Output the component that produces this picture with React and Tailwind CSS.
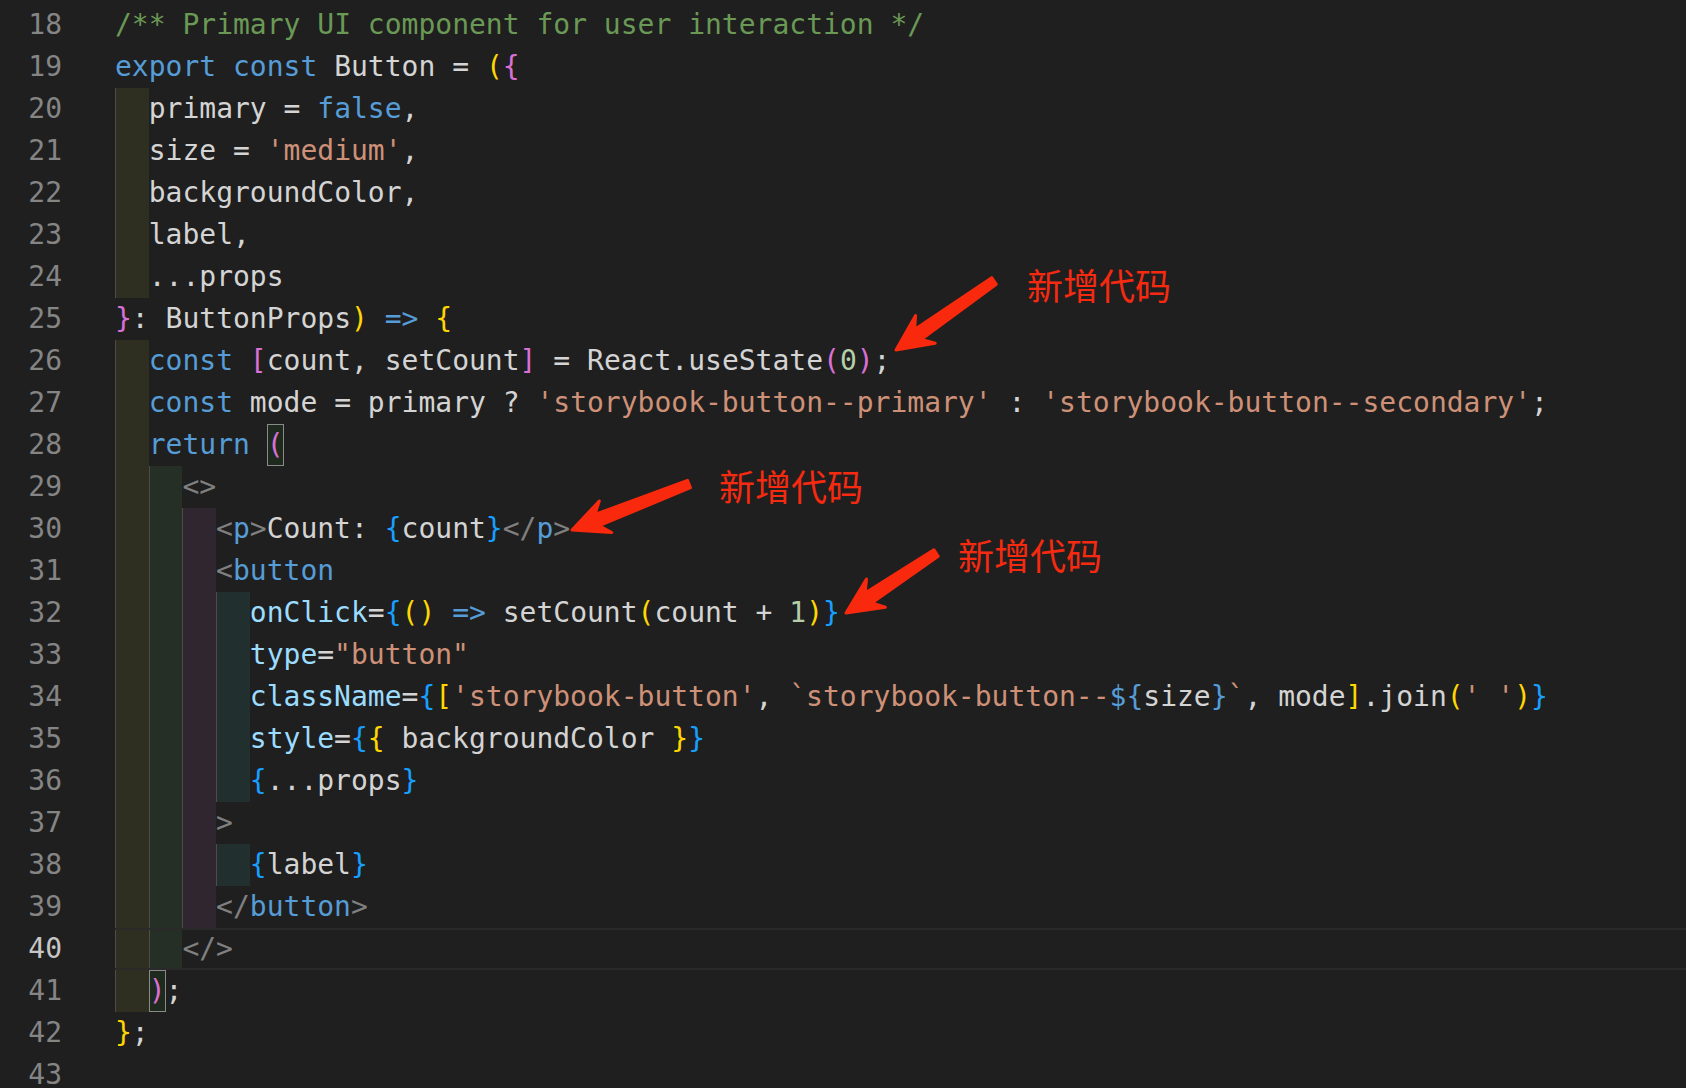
import React from 'react';

const K = '#569cd6';
const T = '#d4d4d4';
const S = '#ce9178';
const C = '#6a9955';
const N = '#b5cea8';
const A = '#9cdcfe';
const G = '#808080';
const Y = '#ffd700';
const P = '#da70d6';
const B = '#179fff';

const indentBg = ['bg-[#2f2f21]', 'bg-[#262f26]', 'bg-[#2f262f]', 'bg-[#222f2f]'];

// each line: [lineNo, indentLevel, tokens]  token = [text, color, boxed?]
const lines = [
    [18, 0, [['/** Primary UI component for user interaction */', C]]],
    [19, 0, [['export const', K], [' Button = ', T], ['(', Y], ['{', P]]],
    [20, 1, [['primary = ', T], ['false', K], [',', T]]],
    [21, 1, [['size = ', T], ["'medium'", S], [',', T]]],
    [22, 1, [['backgroundColor,', T]]],
    [23, 1, [['label,', T]]],
    [24, 1, [['...props', T]]],
    [25, 0, [['}', P], [': ButtonProps', T], [')', Y], [' ', T], ['=>', K], [' ', T], ['{', Y]]],
    [26, 1, [['const', K], [' ', T], ['[', P], ['count, setCount', T], [']', P], [' = React.useState', T], ['(', P], ['0', N], [')', P], [';', T]]],
    [27, 1, [['const', K], [' mode = primary ? ', T], ["'storybook-button--primary'", S], [' : ', T], ["'storybook-button--secondary'", S], [';', T]]],
    [28, 1, [['return', K], [' ', T], ['(', P, true]]],
    [29, 2, [['<>', G]]],
    [30, 3, [['<', G], ['p', K], ['>', G], ['Count: ', T], ['{', B], ['count', T], ['}', B], ['</', G], ['p', K], ['>', G]]],
    [31, 3, [['<', G], ['button', K]]],
    [32, 4, [['onClick', A], ['=', T], ['{', B], ['()', Y], [' ', T], ['=>', K], [' setCount', T], ['(', Y], ['count + ', T], ['1', N], [')', Y], ['}', B]]],
    [33, 4, [['type', A], ['=', T], ['"button"', S]]],
    [34, 4, [['className', A], ['=', T], ['{', B], ['[', Y], ["'storybook-button'", S], [', ', T], ['`storybook-button--', S], ['${', K], ['size', T], ['}', K], ['`', S], [', mode', T], [']', Y], ['.join', T], ['(', Y], ["' '", S], [')', Y], ['}', B]]],
    [35, 4, [['style', A], ['=', T], ['{', B], ['{', Y], [' backgroundColor ', T], ['}', Y], ['}', B]]],
    [36, 4, [['{', B], ['...props', T], ['}', B]]],
    [37, 3, [['>', G]]],
    [38, 4, [['{', B], ['label', T], ['}', B]]],
    [39, 3, [['</', G], ['button', K], ['>', G]]],
    [40, 2, [['</>', G]]],
    [41, 1, [[')', P, true], [';', T]]],
    [42, 0, [['}', Y], [';', T]]],
    [43, 0, []],
];

const CURRENT = 40;

const arrowPoints = (tail, tip) => {
    const dx = tail[0] - tip[0];
    const dy = tail[1] - tip[1];
    const len = Math.hypot(dx, dy);
    const ux = dx / len, uy = dy / len;
    const vx = -uy, vy = ux;
    const pt = (u, v) => `${(tip[0] + u * ux + v * vx).toFixed(1)},${(tip[1] + u * uy + v * vy).toFixed(1)}`;
    return [pt(0, 0), pt(36, 17), pt(27, 6), pt(len, 4), pt(len, -4), pt(27, -6), pt(36, -17)].join(' ');
};

const arrows = [
    { tail: [994, 281], tip: [896, 350] },
    { tail: [689, 484], tip: [572, 530] },
    { tail: [936, 553], tip: [846, 613] },
];

const notes = [
    { left: 'left-[1027px]', top: 'top-[266px]' },
    { left: 'left-[719px]', top: 'top-[467px]' },
    { left: 'left-[958px]', top: 'top-[536px]' },
];

const CodeLine = ({ no, level, tokens }) => {
    const current = no === CURRENT;
    return (
        <div className="flex h-[42px]">
            <div className={`w-[62px] shrink-0 text-right leading-[42px] ${current ? 'text-[#c6c6c6]' : 'text-[#858585]'}`}>
                {no}
            </div>
            <div className={`ml-[53px] flex flex-1 h-[42px] ${current ? 'border-y-2 border-[#2a2a2a]' : ''}`}>
                {Array.from({ length: level }).map((_, i) => (
                    <span key={i} className={`w-[2ch] shrink-0 h-full border-l border-[#4d4d45] ${indentBg[i]}`} />
                ))}
                <span className={`whitespace-pre flex ${current ? 'leading-[38px]' : 'leading-[42px]'}`}>
                    {tokens.map(([text, color, boxed], i) =>
                        boxed ? (
                            <span
                                key={i}
                                className="inline-block h-full shadow-[inset_0_0_0_1px_#8a8a8a] bg-[#1f2a1f]"
                                style={{ color }}
                            >
                                {text}
                            </span>
                        ) : (
                            <span key={i} style={{ color }}>{text}</span>
                        )
                    )}
                </span>
            </div>
        </div>
    );
};

export default function App() {
    return (
        <div className="relative w-[1686px] h-[1088px] overflow-hidden bg-[#1f1f1f] pt-[4px] font-['DejaVu_Sans_Mono',monospace] text-[28px]">
            {lines.map(([no, level, tokens]) => (
                <CodeLine key={no} no={no} level={level} tokens={tokens} />
            ))}

            {/* annotations */}
            <svg className="absolute inset-0 pointer-events-none" width="1686" height="1088">
                {arrows.map((a, i) => (
                    <polygon
                        key={i}
                        points={arrowPoints(a.tail, a.tip)}
                        fill="#f9290d"
                        stroke="#f9290d"
                        strokeWidth="3"
                        strokeLinejoin="round"
                    />
                ))}
            </svg>
            {notes.map((n, i) => (
                <div
                    key={i}
                    className={`absolute ${n.left} ${n.top} text-[36px] leading-none text-[#f62a10] font-['Noto_Sans_CJK_SC',sans-serif]`}
                >
                    新增代码
                </div>
            ))}
        </div>
    );
}
